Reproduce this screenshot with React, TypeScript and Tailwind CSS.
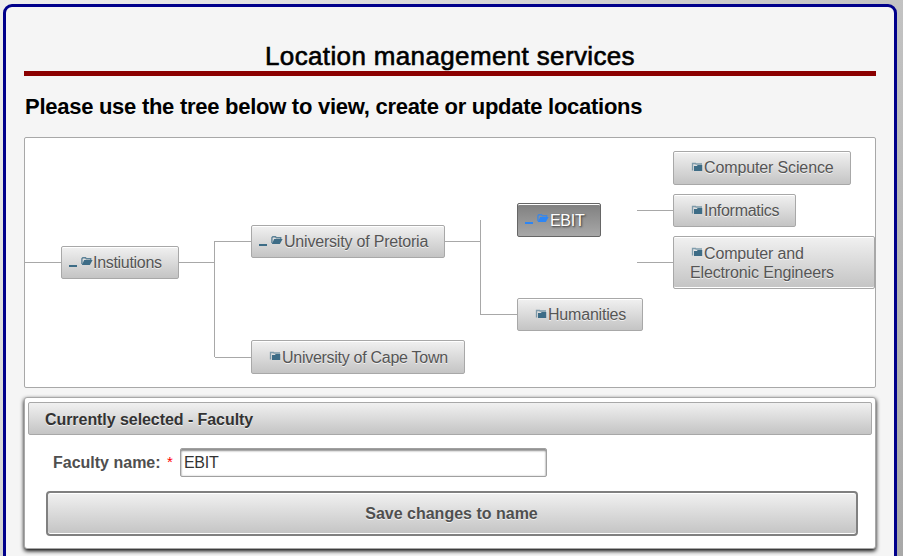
import React from "react";

type Kind = "open" | "closed";

function Folder({ kind, color }: { kind: Kind; color: string }) {
  return kind === "open" ? (
    <svg className="block" width="12" height="9" viewBox="0 0 12 9">
      <path d="M0.9 7V1.8L1.8 0.8H4.5L5.3 1.7H9.7V3" fill="none" stroke={color} strokeWidth="1.4" opacity="0.8" />
      <path d="M0.8 8L3.2 3H11.6L8.8 8Z" fill={color} />
    </svg>
  ) : (
    <svg className="block" width="12" height="10" viewBox="0 0 12 10">
      <path d="M1.5 8.5V1.5H4.5L5 2H11" fill="none" stroke={color} strokeWidth="1.3" opacity="0.6" />
      <path d="M3 9V4H6L6.6 3H11.2V9Z" fill={color} />
    </svg>
  );
}

interface NodeProps {
  box: string;
  label: React.ReactNode;
  text: string;
  expanded?: boolean;
  selected?: boolean;
}

function TreeNode({ box, label, text, expanded, selected }: NodeProps) {
  const color = selected ? "#2d86f5" : "#3d6c86";
  const skin = selected
    ? "border-[#666] from-[#808080] to-[#a8a8a8] text-white [text-shadow:1px_1px_2px_#333] shadow-[inset_0_1px_0_#fff]"
    : "border-[#a8a8a8] from-[#f1f1f1] to-[#c4c4c4] text-[#555] [text-shadow:0_1px_0_rgba(255,255,255,0.7)]";
  return (
    <div className={`absolute rounded-[2px] border bg-gradient-to-b ${skin} ${box}`}>
      {expanded ? (
        <div className="flex pl-[7px] pt-[10px]">
          <svg className="mt-[8px] block" width="8" height="2">
            <rect width="8" height="2" fill={color} />
          </svg>
          <span className="ml-[4px]"><Folder kind="open" color={color} /></span>
          <span className={`whitespace-nowrap text-base leading-[19px] ${text}`}>{label}</span>
        </div>
      ) : (
        <div className="flex pl-[17px] pt-[10px]">
          <Folder kind="closed" color={color} />
          <span className={`whitespace-nowrap text-base leading-[19px] ${text}`}>{label}</span>
        </div>
      )}
    </div>
  );
}

export default function App() {
  return (
    <div className="h-[556px] w-[903px] overflow-hidden bg-[linear-gradient(135deg,#eee,#a8a8a8)] pl-[3px] pt-1 font-['Liberation_Sans',Arial,sans-serif]">
      <main className="h-[600px] w-[894px] rounded-[9px] border-[3px] border-[#00008b] bg-[#f5f5f5] px-[18px] pt-[34px]">
        <h1 className="h-[35px] border-b-[5px] border-[#8b0000] text-center text-[26px] leading-[30px] tracking-[0.36px] text-black [-webkit-text-stroke:0.6px_#000]">
          Location management services
        </h1>
        <h2 className="mt-[18px] h-[26px] whitespace-nowrap pl-px text-[22px] font-bold leading-[26px] tracking-[-0.27px] text-black">
          Please use the tree below to view, create or update locations
        </h2>
        <section className="relative mt-[17px] h-[251px] w-[852px] rounded-[2px] border border-[#a8a8a8] bg-white">
          <svg className="absolute left-0 top-0" width="850" height="249" viewBox="25 138 850 249">
            <path
              d="M25 262.5H61M179 262.5H214M214.5 241V357M214 241.5H251M215 357.5H251M445 241.5H480M480.5 220V314M480 314.5H517M637 210.5H673M637 262.5H673"
              stroke="#a8a8a8"
              fill="none"
            />
          </svg>
          <TreeNode expanded box="left-[36px] top-[108px] w-[118px] h-[33px] shadow-[inset_0_1px_0_#fff]" text="-mt-[4px] tracking-[-0.3px]" label="Instiutions" />
          <TreeNode expanded box="left-[226px] top-[87px] w-[194px] h-[33px] shadow-[inset_0_1px_0_#fff]" text="-mt-[4px] ml-[1px] tracking-[-0.2px]" label="University of Pretoria" />
          <TreeNode box="left-[226px] top-[202px] w-[214px] h-[34px] shadow-[inset_0_1px_0_#fff]" text="-mt-[3px] ml-[1px] tracking-[-0.28px]" label="University of Cape Town" />
          <TreeNode expanded selected box="left-[492px] top-[65px] w-[84px] h-[34px]" text="-mt-[3px] ml-[1px] tracking-[-0.3px]" label="EBIT" />
          <TreeNode box="left-[492px] top-[160px] w-[126px] h-[33px] shadow-[inset_0_1px_0_#fff]" text="-mt-[4px] ml-[1px] tracking-[-0.2px]" label="Humanities" />
          <TreeNode box="left-[648px] top-[13px] w-[178px] h-[34px] shadow-[inset_0_1px_0_#fff]" text="-mt-[4px] ml-[1px] tracking-[-0.13px]" label="Computer Science" />
          <TreeNode box="left-[648px] top-[56px] w-[123px] h-[33px] shadow-[inset_0_1px_0_#fff]" text="-mt-[4px] ml-[1px] tracking-[-0.27px]" label="Informatics" />
          <TreeNode
            box="left-[648px] top-[98px] w-[202px] h-[53px] shadow-[inset_0_1px_0_#fff,inset_0_-1px_0_#fff]"
            text="-mt-[3px] ml-[1px] tracking-[-0.14px]"
            label={<>Computer and<br /><span className="-ml-[14px]">Electronic Engineers</span></>}
          />
        </section>
        <section className="mt-[9px] h-[152px] w-[852px] rounded-[3px] border border-[#a8a8a8] bg-white px-[3px] pt-[4px] shadow-[0_2px_4px_#000]">
          <h3 className="h-[33px] rounded-[2px] border border-[#a8a8a8] bg-gradient-to-b from-[#f1f1f1] to-[#c4c4c4] pl-4 text-base font-bold leading-[33px] tracking-[-0.06px] text-[#333] [text-shadow:0_1px_0_rgba(255,255,255,0.7)]">
            Currently selected - Faculty
          </h3>
          <div className="mt-[13px] flex h-[29px] items-center pl-[25px] text-base leading-[29px]">
            <label className="w-[114px] whitespace-nowrap font-bold text-[#4f4f4f]">Faculty name:</label>
            <span className="w-[13px] pb-0.5 text-[15px] text-[#f00]">*</span>
            <input
              readOnly
              value="EBIT"
              className="h-[29px] w-[367px] rounded-[2px] border border-[#a0a0a0] bg-white px-[3px] text-base tracking-[-0.3px] text-[#333] shadow-[inset_0_2px_2px_#8f8f8f,inset_0_0_2px_#bbb] outline-none"
            />
          </div>
          <button className="ml-[18px] mt-[14px] block h-[45px] w-[812px] rounded-[4px] border-2 border-[#808080] bg-gradient-to-b from-[#f1f1f1] to-[#c4c4c4] pr-px text-base font-bold text-[#4f4f4f] shadow-[inset_0_1px_0_#fff,inset_0_-1px_0_#fff] [text-shadow:0_1px_0_rgba(255,255,255,0.7)]">
            Save changes to name
          </button>
        </section>
      </main>
    </div>
  );
}
